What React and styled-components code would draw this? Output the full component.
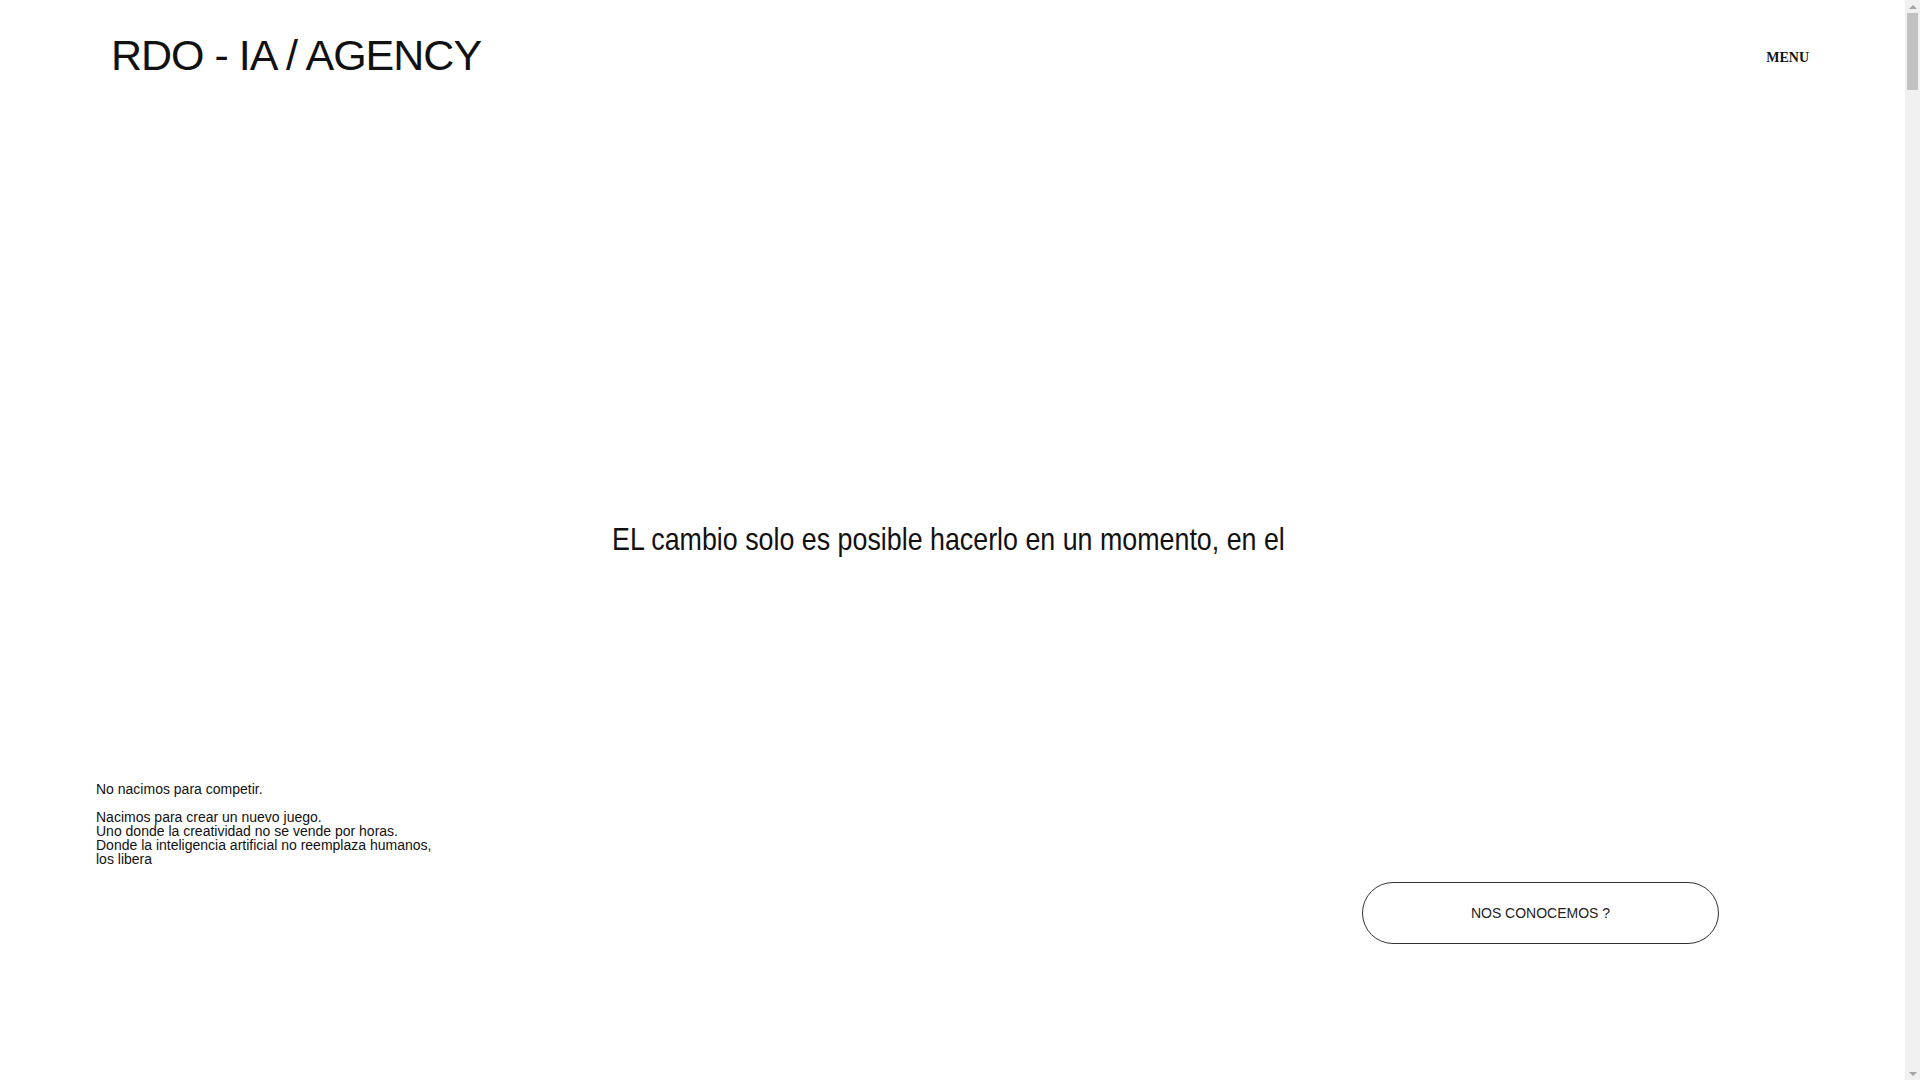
import React from 'react'
import styled, { createGlobalStyle } from 'styled-components'

const GlobalStyle = createGlobalStyle`
  html, body {
    margin: 0;
    padding: 0;
    background: #fff;
  }
  body {
    font-family: "Liberation Sans", Arial, sans-serif;
    color: #111;
  }
`

// leaves room on the right for the scrollbar lane
const Page = styled.div`
  min-height: 14700px;
  padding-right: 15px;
`

const Scrollbar = styled.div`
  position: fixed;
  top: 0;
  right: 0;
  width: 15px;
  height: 100vh;
  background: #f1f1f1;
  display: flex;
  flex-direction: column;
  align-items: center;
`

const Arrow = styled.div`
  width: 0;
  height: 0;
  margin: 5px 0 4px;
  border-left: 4px solid transparent;
  border-right: 4px solid transparent;
  ${p => (p.$down ? 'border-top: 4px solid #a3a3a3;' : 'border-bottom: 4px solid #a3a3a3;')}
`

const Thumb = styled.div`
  width: 11px;
  height: 77px;
  background: #c1c1c1;
`

const Track = styled.div`
  flex: 1;
`

const Header = styled.header`
  display: flex;
  justify-content: space-between;
  align-items: center;
  padding: 34px 96px 0 111px;
`

const Logo = styled.a`
  font-family: "Liberation Sans", Arial, sans-serif;
  font-size: 43px;
  line-height: 1;
  letter-spacing: -1px;
  color: #111;
  text-decoration: none;
`

const MenuButton = styled.button`
  margin-top: 4px;
  font-family: "Liberation Serif", "Times New Roman", serif;
  font-weight: bold;
  font-size: 14px;
  line-height: 1;
  color: #111;
  background: none;
  border: 0;
  padding: 0;
  cursor: pointer;
`

const Hero = styled.section`
  display: flex;
  justify-content: center;
  padding: 446px 8px 0 0;
`

const Headline = styled.h1`
  margin: 0;
  font-family: "Liberation Sans Narrow", "Arial Narrow", "Liberation Sans", sans-serif;
  font-weight: normal;
  font-size: 32px;
  line-height: 1;
  color: #111;
  white-space: nowrap;
  transform: scaleX(0.838);
  transform-origin: center;
`

const Intro = styled.section`
  display: flex;
  flex-direction: column;
  padding: 227px 186px 0 96px;
`

const Manifesto = styled.div`
  font-size: 14px;
  line-height: 14px;
  color: #111;
`

const Line = styled.p`
  margin: 0;
  margin-bottom: ${p => (p.$gap ? '14px' : '0')};
`

const Actions = styled.div`
  display: flex;
  justify-content: flex-end;
  margin-top: 16px;
`

const PillButton = styled.button`
  width: 357px;
  height: 62px;
  border: 1px solid #333;
  border-radius: 999px;
  background: #fff;
  font-family: "Liberation Sans", Arial, sans-serif;
  font-size: 14px;
  color: #222;
  cursor: pointer;
`

export default function App() {
  return (
    <Page>
      <GlobalStyle />
      <Header>
        <Logo href="#">RDO - IA / AGENCY</Logo>
        <MenuButton>MENU</MenuButton>
      </Header>
      <Hero>
        <Headline>EL cambio solo es posible hacerlo en un momento, en el</Headline>
      </Hero>
      <Intro>
        <Manifesto>
          <Line $gap>No nacimos para competir.</Line>
          <Line>Nacimos para crear un nuevo juego.</Line>
          <Line>Uno donde la creatividad no se vende por horas.</Line>
          <Line>Donde la inteligencia artificial no reemplaza humanos,</Line>
          <Line>los libera</Line>
        </Manifesto>
        <Actions>
          <PillButton>NOS CONOCEMOS ?</PillButton>
        </Actions>
      </Intro>
      <Scrollbar>
        <Arrow />
        <Thumb />
        <Track />
        <Arrow $down />
      </Scrollbar>
    </Page>
  )
}
